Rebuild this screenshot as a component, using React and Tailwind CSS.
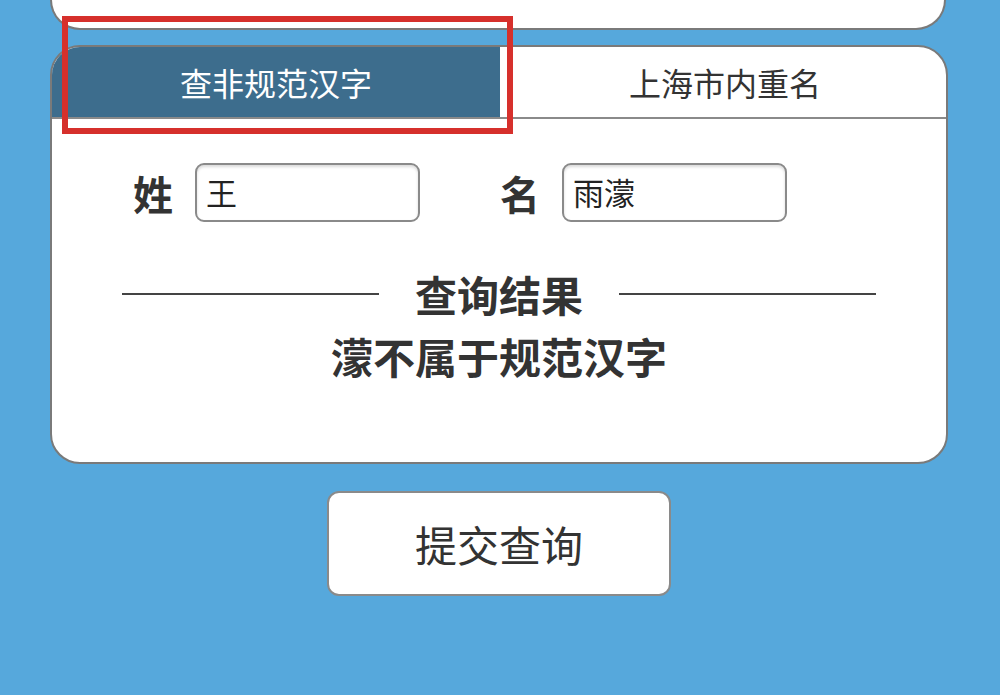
import React from "react";

const font = { fontFamily: '"Noto Sans CJK SC", "Noto Sans", sans-serif' };

const Field = ({ label, value }) => (
  <div className="flex items-center gap-[22px]">
    <span className="w-[40px] text-[40px] leading-none font-bold text-[#333]">{label}</span>
    <div className="w-[225px] h-[59px] flex items-center px-[9px] bg-white border-2 border-[#8a8a8a] rounded-[9px] shadow-[inset_0_2px_3px_rgba(0,0,0,0.15)] text-[31px] text-[#222]">
      {value}
    </div>
  </div>
);

export default function App() {
  return (
    <div className="w-full min-h-[695px] bg-[#56a8dc] flex flex-col pl-[50px] pr-[52px]" style={font}>
      {/* Card above, only its bottom edge is visible */}
      <div className="h-[30px] mr-[2px] bg-white border-2 border-t-0 border-[#7a7a7a] rounded-b-[30px]" />

      {/* Main card */}
      <div className="mt-[15px] bg-white border-2 border-[#7a7a7a] rounded-[30px] overflow-hidden">
        <div className="flex h-[72px] border-b-2 border-[#8a8a8a]">
          <div className="w-[448px] bg-[#3d6d8d] flex items-center justify-center text-[32px] text-white">
            查非规范汉字
          </div>
          <div className="flex-1 flex items-center justify-center text-[32px] text-[#333] pl-[4px]">
            上海市内重名
          </div>
        </div>

        <div className="flex flex-col pt-[44px] pb-[82px]">
          <div className="flex items-center pl-[81px] gap-[80px]">
            <Field label="姓" value="王" />
            <Field label="名" value="雨濛" />
          </div>

          <div className="mt-[48px] flex items-center px-[70px] gap-[36px]">
            <div className="flex-1 h-[2px] bg-[#444]" />
            <span className="text-[42px] leading-[48px] font-bold text-[#333]">查询结果</span>
            <div className="flex-1 h-[2px] bg-[#444]" />
          </div>

          <div className="mt-[14px] text-center text-[42px] leading-[48px] font-bold text-[#333]">
            濛不属于规范汉字
          </div>
        </div>
      </div>

      <div className="flex justify-center mt-[27px]">
        <button className="w-[344px] h-[105px] bg-white border-2 border-[#8a8a8a] rounded-[12px] text-[42px] text-[#333]">
          提交查询
        </button>
      </div>

      {/* Red highlight frame */}
      <div className="absolute left-[62px] top-[16px] w-[451px] h-[118px] border-[6px] border-[#d6302c] pointer-events-none" />
    </div>
  );
}
